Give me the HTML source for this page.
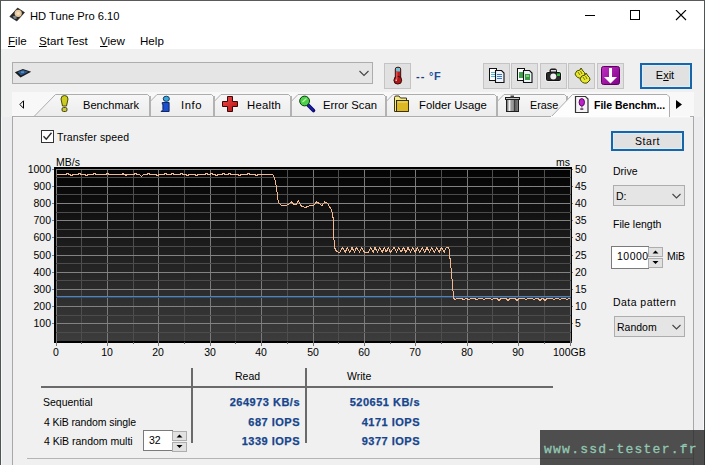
<!DOCTYPE html>
<html><head><meta charset="utf-8">
<style>
*{margin:0;padding:0;box-sizing:border-box}
html,body{width:705px;height:465px;overflow:hidden;background:#f0f0f0;font-family:"Liberation Sans",sans-serif;color:#000}
.a{position:absolute;white-space:nowrap}
#win{position:absolute;left:0;top:0;width:705px;height:465px;background:#f0f0f0;border-left:1px solid #4f5454;border-top:1px solid #5a5a5a;border-right:1px solid #4f5454}
#title{position:absolute;left:1px;top:1px;width:703px;height:30px;background:#fff}
#menu{position:absolute;left:1px;top:31px;width:703px;height:18px;background:#fff}
.t11{font-size:11px}
.mn{font-size:11.6px}
.tl{font-size:11.3px}
.t105{font-size:10.5px}
.lab{font-size:10.5px}
u{text-decoration:underline;text-underline-offset:1px;text-decoration-thickness:1px}
.btn{position:absolute;background:#e1e1e1;border:1px solid #adadad}
.tb{position:absolute;top:63px;width:27px;height:26px;background:#e1e1e1;border:1px solid #c4c4c4}
.val{position:absolute;font-weight:bold;color:#17458c;-webkit-text-stroke:0.25px #17458c;font-size:11px;letter-spacing:0.5px;text-align:right;white-space:nowrap}
</style></head><body>
<div id="win"></div>
<div id="title"></div>
<div id="menu"></div>
<!-- title -->
<svg class="a" style="left:0;top:0" width="30" height="30">
  <polygon points="17.6,8 24.5,12.5 16.8,21 9.8,16.6" fill="#262626" stroke="#1a1a1a" stroke-width="0.6"/>
  <circle cx="18.2" cy="13.3" r="3.6" fill="#e6c89c"/>
  <circle cx="18.2" cy="13.3" r="1.6" fill="#f4e0c0"/>
  <polygon points="12.5,16.5 15.5,15.5 17,18.5 14.5,19" fill="#7a858c"/>
</svg>
<div class="a" style="left:30px;top:10px;font-size:11.2px">HD Tune Pro 6.10</div>
<svg class="a" style="left:585px;top:10px" width="110" height="12">
  <rect x="0" y="5" width="10" height="1" fill="#000"/>
  <rect x="45.5" y="0.5" width="9" height="9" fill="none" stroke="#000" stroke-width="1"/>
  <path d="M91,0 L101,10 M101,0 L91,10" stroke="#000" stroke-width="1.1"/>
</svg>
<!-- menu -->
<div class="a mn" style="left:8px;top:34px"><u>F</u>ile</div>
<div class="a mn" style="left:39px;top:34px"><u>S</u>tart Test</div>
<div class="a mn" style="left:100px;top:34px"><u>V</u>iew</div>
<div class="a mn" style="left:140px;top:34px">Help</div>

<!-- toolbar -->
<div class="a" style="left:12px;top:62px;width:361px;height:22px;background:#e5e5e5;border:1px solid #adadad"></div>
<svg class="a" style="left:0;top:55px" width="40" height="30">
  <polygon points="14.8,17.2 22.9,14 31.2,16.7 20.5,22.4" fill="#1a1a1a"/>
  <polygon points="17.5,17 23,15 28.5,16.8 21,20.5" fill="#2a5a90"/>
  <rect x="21" y="16.5" width="3" height="1.2" fill="#6aa0d0"/>
</svg>
<svg class="a" style="left:359px;top:70px" width="10" height="7"><path d="M0.5,1 L5,5.5 L9.5,1" fill="none" stroke="#444" stroke-width="1.1"/></svg>
<div class="tb" style="left:384px"></div>
<svg class="a" style="left:0;top:55px" width="420" height="35">
  <rect x="395.3" y="12.3" width="5.4" height="15" rx="2" fill="#b81c1c" stroke="#2a0a0a" stroke-width="0.9"/>
  <circle cx="397.8" cy="25.2" r="3.9" fill="#b01818" stroke="#2a0a0a" stroke-width="0.9"/>
  <rect x="396" y="13" width="4" height="3.5" fill="#6cc4d4"/>
  <rect x="396" y="16.5" width="1.5" height="8" fill="#e05050"/>
  <rect x="395.5" y="24.5" width="1.5" height="1.5" fill="#f0c0c0"/>
</svg>
<div class="a" style="left:416px;top:70px;font-size:11px;font-weight:bold;color:#1d3e78;letter-spacing:1px">--</div><div class="a" style="left:429px;top:70px;font-size:11px;font-weight:bold;color:#1d4e98;letter-spacing:0.5px">°F</div>
<div class="tb" style="left:483px"></div>
<div class="tb" style="left:511px"></div>
<div class="tb" style="left:540px"></div>
<div class="tb" style="left:568px"></div>
<div class="tb" style="left:597px"></div>
<svg class="a" style="left:0;top:0" width="705" height="95">
  <defs>
    <linearGradient id="pg" x1="0" y1="0" x2="1" y2="1"><stop offset="0" stop-color="#c030c0"/><stop offset="1" stop-color="#80008a"/></linearGradient>
  </defs>
  <!-- copy text -->
  <rect x="489.5" y="68.5" width="7" height="12" fill="#fff" stroke="#111"/>
  <rect x="491" y="72" width="4" height="1" fill="#50b8d8"/><rect x="491" y="74" width="4" height="1" fill="#50b8d8"/><rect x="491" y="76" width="4" height="1" fill="#50b8d8"/>
  <path d="M495.5,70.5 h6 l2.5,2.5 v9.5 h-8.5z" fill="#eef3fa" stroke="#111" stroke-width="1.1"/>
  <rect x="497" y="74" width="5" height="1" fill="#3a7ac8"/><rect x="497" y="76" width="5" height="1" fill="#3a7ac8"/><rect x="497" y="78" width="5" height="1" fill="#3a7ac8"/>
  <!-- copy image -->
  <rect x="517.5" y="68.5" width="7" height="12" fill="#fff" stroke="#111"/>
  <rect x="519" y="72" width="4" height="6" fill="#40a050"/>
  <path d="M523.5,70.5 h6 l2.5,2.5 v9.5 h-8.5z" fill="#eef3fa" stroke="#111" stroke-width="1.1"/>
  <rect x="525" y="74" width="5" height="6" fill="#3a9a48"/><rect x="526" y="75" width="3" height="2" fill="#80d070"/>
  <!-- camera -->
  <rect x="545.5" y="71.5" width="16" height="10" rx="1.5" fill="#fff"/>
  <rect x="546.5" y="72.5" width="14" height="8" rx="1" fill="#2a2a2a" stroke="#111"/>
  <path d="M550,72.5 v-2 q0,-1.5 1.5,-1.5 h3.5 q1.5,0 1.5,1.5 v2" fill="#2a2a2a" stroke="#111"/>
  <rect x="551" y="70" width="5" height="1.5" fill="#ddd"/>
  <circle cx="553.3" cy="76.5" r="3" fill="#f0f0f0"/>
  <rect x="557" y="73.5" width="3" height="2.5" fill="#30c040"/>
  <!-- yellow hands -->
  <g fill="#e8e830" stroke="#4a4a00" stroke-width="1">
    <path d="M575,74 q1,-4 5,-4 l1,-2 l2,3 q2,1 2,4 l-3,3 q-5,1 -7,-4z"/>
    <path d="M580,79 q1,-4 5,-4 l1,-2 l2,3 q2,1 2,4 l-3,3 q-5,1 -7,-4z"/>
  </g>
  <path d="M578,72 l2,3 M580.5,71 l1.5,3 M583,77 l2,3 M585.5,76 l1.5,3" stroke="#6a6a00" stroke-width="0.9"/>
  <!-- purple down -->
  <rect x="601.5" y="66.5" width="18" height="18" rx="2" fill="url(#pg)" stroke="#5a0060"/>
  <rect x="609" y="68" width="3" height="10" fill="#fff"/>
  <path d="M604,77 h13 l-6.5,6.5z" fill="#fff"/>
</svg>
<div class="a" style="left:640px;top:63px;width:52px;height:26px;background:#e1e1e1;border:2px solid #1a64a8;box-shadow:inset 0 0 0 1px #d4f0fc"></div>
<div class="a t11" style="left:639px;top:69px;width:52px;text-align:center">E<u style="border-color:#000">x</u>it</div>

<!-- tab strip -->
<div class="a" style="left:12px;top:92px;width:682px;height:25px;background:#f8f8f8"></div>
<svg class="a" style="left:0;top:0" width="705" height="465">
  <rect x="1" y="117" width="11" height="348" fill="#ececee"/><rect x="1" y="117" width="1" height="348" fill="#f8f8f8"/>
  <rect x="694" y="117" width="10" height="348" fill="#ececee"/><rect x="703" y="117" width="1" height="348" fill="#f8f8f8"/>
  <path d="M19.8,104.5 L23.5,100.8 L23.5,108.2 Z" fill="none" stroke="#000" stroke-width="1"/>
  <path d="M676,100 L682,104.5 L676,109 Z" fill="#000"/>
  <!-- tabs right to left -->
  <defs><linearGradient id="tg" x1="0" y1="0" x2="0" y2="1"><stop offset="0" stop-color="#f7f7f7"/><stop offset="1" stop-color="#ececec"/></linearGradient></defs>
  <path d="M482.5,116.5 L504.0,94.5 L564.5,94.5 L566.5,96.5 L566.5,116.5 Z" fill="url(#tg)" stroke="#adadad"/>
  <rect x="566" y="96" width="2" height="21" fill="#b2b2b2"/>
  <path d="M371.5,116.5 L393.0,94.5 L494.5,94.5 L496.5,96.5 L496.5,116.5 Z" fill="url(#tg)" stroke="#adadad"/>
  <rect x="496" y="96" width="2" height="21" fill="#b2b2b2"/>
  <path d="M276.5,116.5 L298.0,94.5 L383.5,94.5 L385.5,96.5 L385.5,116.5 Z" fill="url(#tg)" stroke="#adadad"/>
  <rect x="385" y="96" width="2" height="21" fill="#b2b2b2"/>
  <path d="M199.5,116.5 L221.0,94.5 L288.5,94.5 L290.5,96.5 L290.5,116.5 Z" fill="url(#tg)" stroke="#adadad"/>
  <rect x="290" y="96" width="2" height="21" fill="#b2b2b2"/>
  <path d="M135.5,116.5 L157.0,94.5 L211.5,94.5 L213.5,96.5 L213.5,116.5 Z" fill="url(#tg)" stroke="#adadad"/>
  <rect x="213" y="96" width="2" height="21" fill="#b2b2b2"/>
  <path d="M34.0,116.5 L55.5,94.5 L147.5,94.5 L149.5,96.5 L149.5,116.5 Z" fill="url(#tg)" stroke="#adadad"/>
  <rect x="149" y="96" width="2" height="21" fill="#b2b2b2"/>
  <!-- panel border -->
  <rect x="12" y="116" width="682" height="1" fill="#adadad"/>
  <rect x="12" y="116" width="1" height="349" fill="#a8a8a8"/>
  <rect x="693" y="116" width="1" height="349" fill="#a8a8a8"/>
  <rect x="13" y="117" width="680" height="348" fill="#f0f0f0"/>
  <rect x="670" y="116" width="20" height="2" fill="#fbfbfb"/>
  <!-- selected tab -->
  <path d="M550.5,117.5 L572.5,94.5 L667,94.5 L669.5,97 L669.5,117.5" fill="#fdfdfd" stroke="#adadad"/>
  <rect x="551" y="116" width="118" height="2" fill="#fdfdfd"/>
  <rect x="13" y="117" width="680" height="1" fill="#f4f4f4"/>
  <!-- tab icons -->
  <g>
    <path d="M61,99 Q61,95.5 64.5,95.5 Q68,95.5 68,99 L66.5,106 L62.5,106 Z" fill="#cccc1e" stroke="#3a3a00" stroke-width="0.9"/>
    <rect x="62" y="107.5" width="5" height="4" rx="1.5" fill="#c8c840" stroke="#3a3a00" stroke-width="0.9"/>
  </g>
  <g>
    <ellipse cx="166.3" cy="98.8" rx="3.1" ry="2.6" fill="#3aa8e0" stroke="#0a2a50" stroke-width="0.9"/>
    <path d="M162.3,102.5 h6.8 v9 h-8 l1.8,-1.8 v-5.5 h-0.6z" fill="#1a50d0" stroke="#0a1a50" stroke-width="0.9"/>
  </g>
  <defs><linearGradient id="cg" x1="0" y1="0" x2="1" y2="1"><stop offset="0" stop-color="#f04a4a"/><stop offset="1" stop-color="#b81010"/></linearGradient></defs>
  <path d="M227.5,96.5 h5 v5 h5 v5 h-5 v5 h-5 v-5 h-5 v-5 h5z" fill="url(#cg)" stroke="#3a0606" stroke-width="1"/>
  <g>
    <line x1="308" y1="105" x2="313.5" y2="110.5" stroke="#0a0a70" stroke-width="3.6" stroke-linecap="round"/>
    <line x1="308" y1="105" x2="313" y2="110" stroke="#2020b0" stroke-width="1.5" stroke-linecap="round"/>
    <circle cx="304.6" cy="101" r="4.9" fill="#4cd04c" stroke="#0a3a0a" stroke-width="1"/>
    <path d="M302.5,102 l4,-3.5" stroke="#b8f4a8" stroke-width="1.2"/>
  </g>
  <g>
    <path d="M394.5,111.5 V97.5 q0,-1.5 1.5,-1.5 h3 l1.5,2 h6 v3.5 h-10 v10z" fill="#f2ea90" stroke="#2a2200" stroke-width="0.9"/>
    <rect x="396.5" y="100.5" width="12" height="11" fill="#dcb822" stroke="#2a2200" stroke-width="0.9"/>
    <rect x="397.5" y="101.5" width="10" height="1" fill="#f4e080"/>
  </g>
  <g>
    <rect x="506.5" y="98.5" width="12" height="13" fill="#8a8a8a" stroke="#1e1e1e" stroke-width="1"/>
    <rect x="508" y="100" width="1" height="11" fill="#bdbdbd"/>
    <rect x="509" y="100" width="1.5" height="11" fill="#f0f0f0"/>
    <rect x="511" y="100" width="2" height="11" fill="#9a9a9a"/>
    <rect x="514" y="99" width="1.5" height="12" fill="#3a3a3a"/>
    <rect x="516" y="100" width="1.5" height="11" fill="#6a6a6a"/>
    <rect x="505.5" y="97.5" width="14" height="2" fill="#c8c8c8" stroke="#1e1e1e" stroke-width="1"/>
    <rect x="510.5" y="95.5" width="3.5" height="2" fill="#444"/>
  </g>
  <g>
    <path d="M575.5,96.5 h10 l2.5,2.5 v13.5 h-12.5z" fill="#f4f4f4" stroke="#333" stroke-width="1.2"/>
    <ellipse cx="581.8" cy="102.3" rx="2.7" ry="3.7" fill="#c020c8" stroke="#4a0058" stroke-width="0.9"/>
    <rect x="581" y="106" width="1.6" height="1.5" fill="#9a509a"/>
    <rect x="580.3" y="108.3" width="3" height="1.5" fill="#503050"/>
  </g>
</svg>
<div class="a t11" style="left:83px;top:99px;font-size:11.1px">Benchmark</div>
<div class="a tl" style="left:181px;top:99px;letter-spacing:0.6px">Info</div>
<div class="a tl" style="left:247px;top:99px;letter-spacing:0.25px">Health</div>
<div class="a tl" style="left:323px;top:99px">Error Scan</div>
<div class="a tl" style="left:419px;top:99px">Folder Usage</div>
<div class="a t11" style="left:530px;top:99px;font-size:10.8px">Erase</div>
<div class="a" style="left:594px;top:99px;font-size:10.5px;font-weight:bold">File Benchm...</div>

<!-- panel content -->
<div class="a" style="left:41px;top:130px;width:13px;height:13px;border:1px solid #333;background:#fff"></div>
<svg class="a" style="left:41px;top:130px" width="13" height="13"><path d="M2.5,6.2 L5.3,9.2 L10.5,2.8" fill="none" stroke="#2a2a2a" stroke-width="1.35"/></svg>
<div class="a t105" style="left:57px;top:131px;letter-spacing:0.15px">Transfer speed</div>
<svg class="a" style="left:0;top:0" width="705" height="465" viewBox="0 0 705 465" shape-rendering="crispEdges">
<defs><linearGradient id="bg" x1="0" y1="0" x2="0" y2="1"><stop offset="0" stop-color="#020202"/><stop offset="1" stop-color="#3d3d3d"/></linearGradient></defs>
<rect x="54" y="167" width="518" height="176" fill="url(#bg)"/>
<rect x="56" y="169" width="1" height="177" fill="#7a7a7a"/>
<rect x="81" y="169" width="1" height="172" fill="#4e4e4e"/>
<rect x="81" y="341" width="1" height="3" fill="#6a6a6a"/>
<rect x="107" y="169" width="1" height="177" fill="#7a7a7a"/>
<rect x="133" y="169" width="1" height="172" fill="#4e4e4e"/>
<rect x="133" y="341" width="1" height="3" fill="#6a6a6a"/>
<rect x="158" y="169" width="1" height="177" fill="#7a7a7a"/>
<rect x="184" y="169" width="1" height="172" fill="#4e4e4e"/>
<rect x="184" y="341" width="1" height="3" fill="#6a6a6a"/>
<rect x="210" y="169" width="1" height="177" fill="#7a7a7a"/>
<rect x="235" y="169" width="1" height="172" fill="#4e4e4e"/>
<rect x="235" y="341" width="1" height="3" fill="#6a6a6a"/>
<rect x="261" y="169" width="1" height="177" fill="#7a7a7a"/>
<rect x="287" y="169" width="1" height="172" fill="#4e4e4e"/>
<rect x="287" y="341" width="1" height="3" fill="#6a6a6a"/>
<rect x="313" y="169" width="1" height="177" fill="#7a7a7a"/>
<rect x="338" y="169" width="1" height="172" fill="#4e4e4e"/>
<rect x="338" y="341" width="1" height="3" fill="#6a6a6a"/>
<rect x="364" y="169" width="1" height="177" fill="#7a7a7a"/>
<rect x="390" y="169" width="1" height="172" fill="#4e4e4e"/>
<rect x="390" y="341" width="1" height="3" fill="#6a6a6a"/>
<rect x="415" y="169" width="1" height="177" fill="#7a7a7a"/>
<rect x="441" y="169" width="1" height="172" fill="#4e4e4e"/>
<rect x="441" y="341" width="1" height="3" fill="#6a6a6a"/>
<rect x="467" y="169" width="1" height="177" fill="#7a7a7a"/>
<rect x="492" y="169" width="1" height="172" fill="#4e4e4e"/>
<rect x="492" y="341" width="1" height="3" fill="#6a6a6a"/>
<rect x="518" y="169" width="1" height="177" fill="#7a7a7a"/>
<rect x="544" y="169" width="1" height="172" fill="#4e4e4e"/>
<rect x="544" y="341" width="1" height="3" fill="#6a6a6a"/>
<rect x="570" y="169" width="1" height="177" fill="#7a7a7a"/>
<rect x="52" y="169" width="521" height="1" fill="#828282"/>
<rect x="56" y="177" width="515" height="1" fill="#4c4c4c"/>
<rect x="52" y="186" width="521" height="1" fill="#828282"/>
<rect x="56" y="194" width="515" height="1" fill="#4c4c4c"/>
<rect x="52" y="203" width="521" height="1" fill="#828282"/>
<rect x="56" y="212" width="515" height="1" fill="#4c4c4c"/>
<rect x="52" y="220" width="521" height="1" fill="#828282"/>
<rect x="56" y="229" width="515" height="1" fill="#4c4c4c"/>
<rect x="52" y="237" width="521" height="1" fill="#828282"/>
<rect x="56" y="246" width="515" height="1" fill="#4c4c4c"/>
<rect x="52" y="255" width="521" height="1" fill="#828282"/>
<rect x="56" y="263" width="515" height="1" fill="#4c4c4c"/>
<rect x="52" y="272" width="521" height="1" fill="#828282"/>
<rect x="56" y="280" width="515" height="1" fill="#4c4c4c"/>
<rect x="52" y="289" width="521" height="1" fill="#828282"/>
<rect x="56" y="297" width="515" height="1" fill="#4c4c4c"/>
<rect x="52" y="306" width="521" height="1" fill="#828282"/>
<rect x="56" y="315" width="515" height="1" fill="#4c4c4c"/>
<rect x="52" y="323" width="521" height="1" fill="#828282"/>
<rect x="56" y="332" width="515" height="1" fill="#4c4c4c"/>
<rect x="54" y="167" width="2" height="176" fill="#000"/>
<rect x="54" y="167" width="518" height="2" fill="#000"/>
<rect x="54" y="341" width="516" height="2" fill="#000"/>
<rect x="571" y="169" width="1" height="172" fill="#000"/>
<rect x="56" y="341" width="1" height="5" fill="#7a7a7a"/>
<rect x="81" y="342" width="1" height="2" fill="#6a6a6a"/>
<rect x="107" y="341" width="1" height="5" fill="#7a7a7a"/>
<rect x="133" y="342" width="1" height="2" fill="#6a6a6a"/>
<rect x="158" y="341" width="1" height="5" fill="#7a7a7a"/>
<rect x="184" y="342" width="1" height="2" fill="#6a6a6a"/>
<rect x="210" y="341" width="1" height="5" fill="#7a7a7a"/>
<rect x="235" y="342" width="1" height="2" fill="#6a6a6a"/>
<rect x="261" y="341" width="1" height="5" fill="#7a7a7a"/>
<rect x="287" y="342" width="1" height="2" fill="#6a6a6a"/>
<rect x="313" y="341" width="1" height="5" fill="#7a7a7a"/>
<rect x="338" y="342" width="1" height="2" fill="#6a6a6a"/>
<rect x="364" y="341" width="1" height="5" fill="#7a7a7a"/>
<rect x="390" y="342" width="1" height="2" fill="#6a6a6a"/>
<rect x="415" y="341" width="1" height="5" fill="#7a7a7a"/>
<rect x="441" y="342" width="1" height="2" fill="#6a6a6a"/>
<rect x="467" y="341" width="1" height="5" fill="#7a7a7a"/>
<rect x="492" y="342" width="1" height="2" fill="#6a6a6a"/>
<rect x="518" y="341" width="1" height="5" fill="#7a7a7a"/>
<rect x="544" y="342" width="1" height="2" fill="#6a6a6a"/>
<rect x="570" y="341" width="1" height="5" fill="#7a7a7a"/>
<rect x="56" y="296" width="515" height="1" fill="#4a84c4"/><rect x="56" y="297" width="515" height="1" fill="#2a4a6a" opacity="0.5"/>
</svg>
<svg class="a" style="left:0;top:0" width="705" height="465" viewBox="0 0 705 465">
<path d="M56.5,174.5 L65.5,174.5 L67.5,173.5 L69.5,174.5 L69.5,174.5 L71.5,175.5 L73.5,174.5 L77.5,174.5 L79.5,173.5 L81.5,174.5 L84.5,174.5 L86.5,175.5 L88.5,174.5 L92.5,174.5 L94.5,173.5 L96.5,174.5 L105.5,174.5 L107.5,173.5 L109.5,174.5 L121.5,174.5 L123.5,173.5 L123.5,174.5 L125.5,174.5 L125.5,175.5 L127.5,174.5 L133.5,174.5 L135.5,173.5 L137.5,174.5 L139.5,174.5 L141.5,176.5 L143.5,174.5 L146.5,174.5 L148.5,173.5 L150.5,174.5 L155.5,174.5 L157.5,175.5 L159.5,174.5 L163.5,174.5 L165.5,173.5 L167.5,174.5 L170.5,174.5 L172.5,173.5 L174.5,174.5 L179.5,174.5 L181.5,173.5 L183.5,174.5 L185.5,174.5 L187.5,175.5 L189.5,174.5 L194.5,174.5 L196.5,175.5 L198.5,174.5 L204.5,174.5 L206.5,173.5 L208.5,174.5 L209.5,174.5 L211.5,173.5 L213.5,174.5 L214.5,174.5 L216.5,175.5 L218.5,174.5 L221.5,174.5 L223.5,173.5 L225.5,174.5 L227.5,174.5 L229.5,173.5 L231.5,174.5 L237.5,174.5 L239.5,175.5 L241.5,174.5 L246.5,174.5 L248.5,173.5 L250.5,174.5 L254.5,174.5 L256.5,175.5 L258.5,174.5 L271.5,174.5 L272.8,175.0 L274.4,177.6 L276.3,186.3 L277.9,199.9 L278.9,202.9 L280.9,204.9 L283.4,205.9 L287.9,204.9 L291.4,201.7 L293.8,204.4 L295.8,204.9 L298.3,200.7 L300.3,204.9 L301.8,206.4 L305.7,207.4 L307.7,206.4 L310.7,205.4 L313.7,205.4 L316.7,201.7 L319.7,203.9 L322.1,205.9 L324.6,201.7 L327.1,202.9 L329.1,205.9 L331.1,209.4 L332.6,213.8 L333.4,221.0 L333.8,235.0 L334.3,246.0 L335.5,250.2 L337.3,251.8 L339.7,252.3 L342.7,247.5 L345.2,252.3 L347.3,247.5 L349.9,252.3 L352.0,247.5 L354.6,252.3 L356.3,247.5 L359.7,252.3 L361.4,247.5 L364.5,252.3 L368.5,252.3 L370.7,247.5 L373.3,252.3 L375.0,247.5 L377.6,252.3 L379.7,247.5 L382.2,252.3 L384.4,247.5 L386.0,252.3 L388.6,247.5 L390.3,252.3 L394.1,247.5 L396.6,252.3 L398.8,247.5 L401.0,252.3 L403.6,247.5 L405.9,252.3 L408.0,247.5 L410.5,252.3 L412.7,247.5 L415.2,252.3 L417.4,247.5 L419.8,252.3 L422.4,247.5 L424.6,252.3 L427.0,247.5 L429.6,252.3 L431.8,247.5 L434.3,252.3 L436.7,247.5 L439.1,252.3 L441.5,247.5 L444.1,252.3 L446.3,247.5 L448.0,247.5 L448.9,248.0 L450.1,259.3 L451.5,273.0 L452.8,288.5 L453.5,298.0 L454.9,299.5 L457.0,298.5 L462.0,298.5 L464.0,300.0 L466.0,298.5 L467.0,298.5 L469.0,300.0 L471.0,298.5 L475.0,298.5 L477.0,300.0 L479.0,298.5 L482.0,298.5 L484.0,299.5 L486.0,298.5 L490.0,298.5 L492.0,299.5 L494.0,298.5 L497.0,298.5 L499.0,300.5 L501.0,298.5 L506.0,298.5 L508.0,300.5 L510.0,298.5 L515.0,298.5 L517.0,300.5 L519.0,298.5 L524.0,298.5 L526.0,299.5 L528.0,298.5 L532.0,298.5 L534.0,299.5 L536.0,298.5 L538.0,298.5 L540.0,300.5 L542.0,298.5 L543.0,298.5 L545.0,300.5 L547.0,298.5 L552.0,298.5 L554.0,299.5 L556.0,298.5 L558.0,298.5 L560.0,299.5 L562.0,298.5 L565.0,298.5 L567.0,299.5 L569.0,298.5 L570.3,298.5" fill="none" stroke="#f2b890" stroke-width="1" stroke-linejoin="round" shape-rendering="crispEdges"/>
</svg>
<div class="a lab" style="left:0;width:51px;text-align:right;top:163px">1000</div>
<div class="a lab" style="left:575px;top:163px">50</div>
<div class="a lab" style="left:0;width:51px;text-align:right;top:180px">900</div>
<div class="a lab" style="left:575px;top:180px">45</div>
<div class="a lab" style="left:0;width:51px;text-align:right;top:197px">800</div>
<div class="a lab" style="left:575px;top:197px">40</div>
<div class="a lab" style="left:0;width:51px;text-align:right;top:214px">700</div>
<div class="a lab" style="left:575px;top:214px">35</div>
<div class="a lab" style="left:0;width:51px;text-align:right;top:231px">600</div>
<div class="a lab" style="left:575px;top:231px">30</div>
<div class="a lab" style="left:0;width:51px;text-align:right;top:249px">500</div>
<div class="a lab" style="left:575px;top:249px">25</div>
<div class="a lab" style="left:0;width:51px;text-align:right;top:266px">400</div>
<div class="a lab" style="left:575px;top:266px">20</div>
<div class="a lab" style="left:0;width:51px;text-align:right;top:283px">300</div>
<div class="a lab" style="left:575px;top:283px">15</div>
<div class="a lab" style="left:0;width:51px;text-align:right;top:300px">200</div>
<div class="a lab" style="left:575px;top:300px">10</div>
<div class="a lab" style="left:0;width:51px;text-align:right;top:317px">100</div>
<div class="a lab" style="left:575px;top:317px">5</div>
<div class="a lab" style="left:36px;width:40px;text-align:center;top:346px">0</div>
<div class="a lab" style="left:87px;width:40px;text-align:center;top:346px">10</div>
<div class="a lab" style="left:138px;width:40px;text-align:center;top:346px">20</div>
<div class="a lab" style="left:190px;width:40px;text-align:center;top:346px">30</div>
<div class="a lab" style="left:241px;width:40px;text-align:center;top:346px">40</div>
<div class="a lab" style="left:293px;width:40px;text-align:center;top:346px">50</div>
<div class="a lab" style="left:344px;width:40px;text-align:center;top:346px">60</div>
<div class="a lab" style="left:395px;width:40px;text-align:center;top:346px">70</div>
<div class="a lab" style="left:447px;width:40px;text-align:center;top:346px">80</div>
<div class="a lab" style="left:498px;width:40px;text-align:center;top:346px">90</div>
<div class="a lab" style="left:553px;top:346px">100GB</div>
<div class="a lab" style="left:56px;top:156px">MB/s</div>
<div class="a lab" style="left:556px;top:156px">ms</div>


<div class="a" style="left:611px;top:131px;width:73px;height:20px;background:#e1e1e1;border:2px solid #1a64a8;box-shadow:inset 0 0 0 1px #d4f0fc"></div>
<div class="a t105" style="left:611px;top:135px;width:73px;text-align:center;letter-spacing:0.6px">Start</div>
<div class="a t105" style="left:613px;top:165px">Drive</div>
<div class="a" style="left:613px;top:185px;width:72px;height:21px;background:#e5e5e5;border:1px solid #adadad"></div>
<div class="a t105" style="left:616px;top:190px">D:</div>
<svg class="a" style="left:672px;top:193px" width="10" height="7"><path d="M0.5,1 L4.5,5 L8.5,1" fill="none" stroke="#444" stroke-width="1.1"/></svg>
<div class="a t105" style="left:613px;top:218px">File length</div>
<div class="a" style="left:611px;top:246px;width:38px;height:23px;background:#fff;border:1px solid #7a7a7a;border-right:none"></div>
<div class="a t105" style="left:617px;top:250px;letter-spacing:0.5px">10000</div>
<div class="btn" style="left:648px;top:247px;width:15px;height:10px"></div>
<div class="btn" style="left:648px;top:258px;width:15px;height:10px"></div>
<svg class="a" style="left:648px;top:247px" width="15" height="21"><path d="M4.5,6.5 L7.5,3.5 L10.5,6.5Z M4.5,14 L7.5,17 L10.5,14Z" fill="#000"/></svg>
<div class="a t105" style="left:667px;top:250px">MiB</div>
<div class="a t105" style="left:613px;top:296px;letter-spacing:0.45px">Data pattern</div>
<div class="a" style="left:614px;top:316px;width:71px;height:21px;background:#e5e5e5;border:1px solid #adadad"></div>
<div class="a t105" style="left:617px;top:321px">Random</div>
<svg class="a" style="left:672px;top:324px" width="10" height="7"><path d="M0.5,1 L4.5,5 L8.5,1" fill="none" stroke="#444" stroke-width="1.1"/></svg>

<svg class="a" style="left:0;top:0" width="705" height="465">
  <rect x="41" y="386" width="512" height="2" fill="#6a6a6a"/>
  <rect x="191" y="368" width="2" height="75" fill="#6a6a6a"/>
  <rect x="305" y="368" width="2" height="75" fill="#6a6a6a"/>
  <rect x="27" y="458" width="666" height="1" fill="#b4b4b4"/>
</svg>
<div class="a t105" style="left:235px;top:370px">Read</div>
<div class="a t105" style="left:347px;top:370px">Write</div>
<div class="a t105" style="left:43px;top:396px">Sequential</div>
<div class="a t105" style="left:44px;top:416px;letter-spacing:-0.1px">4 KiB random single</div>
<div class="a t105" style="left:44px;top:435px">4 KiB random multi</div>
<div class="a" style="left:143px;top:430px;width:30px;height:21px;background:#fff;border:1px solid #7a7a7a;border-right:none"></div>
<div class="a t105" style="left:149px;top:434px">32</div>
<div class="btn" style="left:172px;top:431px;width:15px;height:10px"></div>
<div class="btn" style="left:172px;top:442px;width:15px;height:10px"></div>
<svg class="a" style="left:172px;top:431px" width="15" height="21"><path d="M4.5,6.5 L7.5,3.5 L10.5,6.5Z M4.5,14 L7.5,17 L10.5,14Z" fill="#000"/></svg>
<div class="val" style="left:200px;width:100px;top:396px">264973 KB/s</div>
<div class="val" style="left:200px;width:100px;top:416px">687 IOPS</div>
<div class="val" style="left:200px;width:100px;top:435px">1339 IOPS</div>
<div class="val" style="left:320px;width:100px;top:396px">520651 KB/s</div>
<div class="val" style="left:320px;width:100px;top:416px">4171 IOPS</div>
<div class="val" style="left:320px;width:100px;top:435px">9377 IOPS</div>
<div class="a" style="left:540px;top:430px;width:165px;height:35px;background:rgba(42,42,42,0.82)"></div>
<div class="a" style="left:544px;top:442px;font-family:'Liberation Mono',monospace;font-size:13px;letter-spacing:1.25px;color:#92c8b2;-webkit-text-stroke:0.3px #92c8b2">www.ssd-tester.fr</div>
</body></html>
